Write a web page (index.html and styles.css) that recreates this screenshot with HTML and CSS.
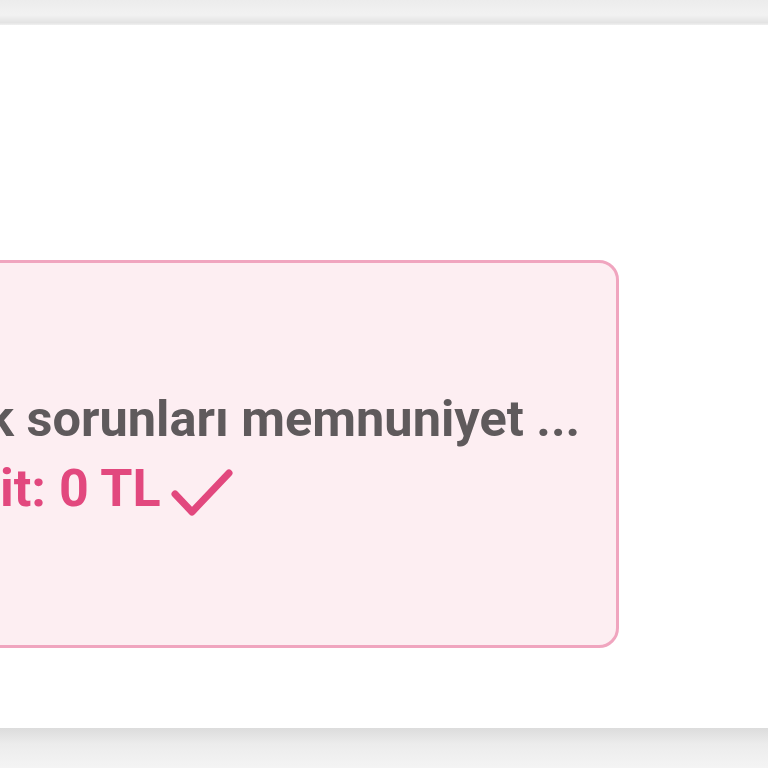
FILE: index.html
```html
<!DOCTYPE html>
<html lang="tr">

<head>
    <meta charset="utf-8">
    <meta name="viewport" content="width=device-width, initial-scale=1.0">
    <title>Paket</title>

    <link rel="stylesheet" href="styles.css">

</head>

<body>

    <div class="ust_bant"></div>

    <main class="panel">
        <article class="paket_kart">
            <p class="paket_aciklama">k sorunları memnuniyet ...</p>
            <p class="paket_limit">
                <span>it: 0 TL</span>
                <svg class="tik" width="62" height="48" viewBox="0 0 62 48">
                    <path d="M4 26 L21 44 L58 5" fill="none" stroke="#e2487e" stroke-width="7" stroke-linecap="round" stroke-linejoin="round"/>
                </svg>
            </p>
        </article>
    </main>

    <div class="alt_golge"></div>

</body>

</html>
```

FILE: styles.css
```css
body {
    margin: 0;
    background-color: #f4f4f4;
    overflow: hidden;
    font-family: Roboto, "Liberation Sans", sans-serif;
}

.ust_bant {
    height: 25px;
    background: linear-gradient(#ececec, #f2f2f2 60%, #e3e3e3 90%, #f0f0f0);
}

.panel {
    height: 468px;
    padding-top: 235px;
    background-color: white;
}

.paket_kart {
    box-sizing: border-box;
    width: 639px;
    height: 388px;
    margin-left: -20px;
    padding-left: 4px;
    border: 3px solid #f0a5bf;
    border-radius: 20px;
    background-color: #fdeef2;
    display: flex;
    flex-direction: column;
    justify-content: center;
}

.paket_aciklama {
    margin: 0;
    font-size: 50.5px;
    line-height: 58px;
    font-weight: bold;
    color: #5f5a5c;
    white-space: nowrap;
}

.paket_limit {
    margin: 12px 0 0 13px;
    font-size: 52px;
    line-height: 58px;
    font-weight: bold;
    color: #e2487e;
    display: flex;
    align-items: center;
    gap: 10px;
}

.tik {
    margin-top: 6px;
}

.alt_golge {
    height: 40px;
    background: linear-gradient(#dcdcdc, #ececec 40%, #f4f4f4);
}
```
